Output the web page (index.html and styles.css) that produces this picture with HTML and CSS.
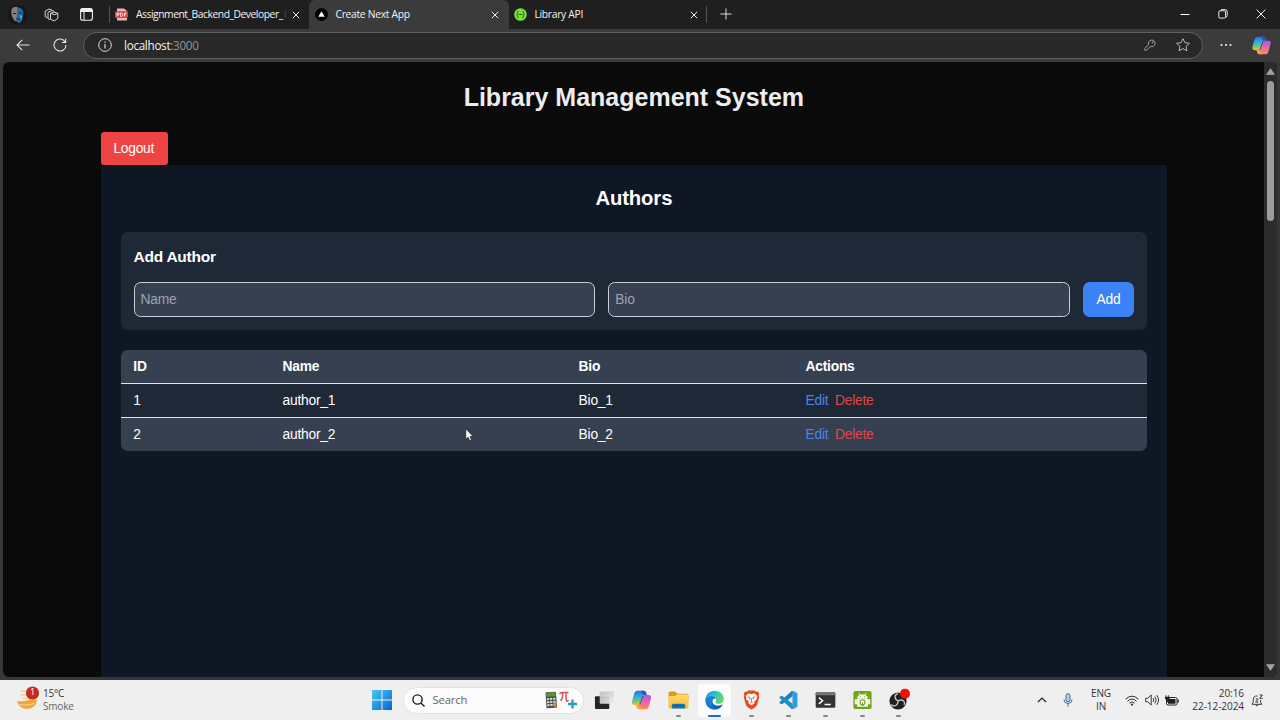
FILE: index.html
```html
<!DOCTYPE html>
<html lang="en">
<head>
<meta charset="utf-8">
<title>Library Management System</title>
<link rel="stylesheet" href="styles.css">
</head>
<body>
<svg class="defs" width="0" height="0" aria-hidden="true">
  <defs>
    <linearGradient id="cpBlue" x1="0" y1="0" x2="0" y2="1"><stop offset="0" stop-color="#2a6fe0"/><stop offset=".45" stop-color="#28b6dd"/><stop offset=".75" stop-color="#7cc66a"/><stop offset="1" stop-color="#f4c52c"/></linearGradient>
    <linearGradient id="cpPink" x1="0" y1="0" x2="0" y2="1"><stop offset="0" stop-color="#a25be8"/><stop offset=".5" stop-color="#ee62a8"/><stop offset="1" stop-color="#ff8a4c"/></linearGradient>
    <linearGradient id="win" x1="0" y1="0" x2="1" y2="1"><stop offset="0" stop-color="#4cc6f7"/><stop offset="1" stop-color="#0568c8"/></linearGradient>
    <linearGradient id="edgeTop" x1="0" y1="0" x2="1" y2=".4"><stop offset="0" stop-color="#1f9fe0"/><stop offset=".5" stop-color="#2bbfd0"/><stop offset="1" stop-color="#62d668"/></linearGradient>
    <linearGradient id="edgeLow" x1="0" y1="0" x2="0" y2="1"><stop offset="0" stop-color="#1b8fdc"/><stop offset="1" stop-color="#0f58a8"/></linearGradient>
    <linearGradient id="folder" x1="0" y1="0" x2="0" y2="1"><stop offset="0" stop-color="#ffdb6b"/><stop offset="1" stop-color="#f6bd30"/></linearGradient>
    <linearGradient id="task" x1="0" y1="0" x2="1" y2="1"><stop offset="0" stop-color="#bdbdbd"/><stop offset="1" stop-color="#f0f0f0"/></linearGradient>
    <symbol id="close" viewBox="0 0 8 8"><path d="M.8.8l6.400 6.400M7.200.8L.8 7.200" fill="none" stroke="currentColor" stroke-width="1"/></symbol>
    <symbol id="copilot" viewBox="0 0 20 20">
      <path d="M6 .8h6q2 0 2.600 1.900l.6 2.200h-1.700q-2 0-2.600 2L9 13.200Q8.400 15 6.500 15H3.200Q-.4 15 .5 11.500L2.600 3.700Q3.400.8 6 .8z" fill="url(#cpBlue)"/>
      <path d="M14 19.200H8q-2 0-2.600-1.900l-.6-2.200h1.700q2 0 2.600-2L11 6.800Q11.600 5 13.500 5h3.300q3.600 0 2.700 3.500l-2.100 7.800q-.8 2.900-3.400 2.900z" fill="url(#cpPink)"/>
      <path d="M9.500.8H12q2 0 2.600 1.900l.6 2.300h-2.300q-1.600 0-2.100-1.700z" fill="#2452c9"/>
      <path d="M10.500 19.200H8q-2 0-2.600-1.900L4.800 15h2.300q1.600 0 2.100 1.700z" fill="#f5a33f"/>
      <path class="fold" d="M11 5.700h1.500q-1 .3-1.400 1.600l-1.900 6q-.4 1-1 1H7q1.300-.2 1.700-1.500l1.900-6z"/>
    </symbol>
  </defs>
</svg>
<div class="screen">
  <div class="tabstrip">
    <div class="strip-tools">
      <svg class="avatar" viewBox="0 0 20 20"><circle cx="10" cy="10" r="10" fill="#15171c"/><path d="M3.500 4q3-3 6-2l1 6-1 8q-3 1-4-2-3-4-2-10z" fill="#8b7a82"/><path d="M9.500 2.500q5 0 6 5l-1.500 8-3 3q-3-2-2.500-6z" fill="#256a9e"/><path d="M5 8.500h3M11 8h3M8 14h4" stroke="#182433"/><path d="M12 10l2 1-1 4z" fill="#4fc1f1"/></svg>
      <svg class="workspaces" viewBox="0 0 15 14" fill="none" stroke="#d5d5d5" stroke-width="1" stroke-linejoin="round"><path d="M6.500 5.300L10 4l3.800 1.300v5.200L10.300 12.900 6.500 11.300zM6.500 5.300l3.800 1.400 3.500-1.400"/><path d="M6 11.500L4 10.700V4.300L7.700 2.500l2.600.9M3.600 9.700L1.200 8.800V3.200L5 1l2.800.9"/></svg>
      <svg class="tabmenu" viewBox="0 0 13 13"><rect x=".6" y=".6" width="11.800" height="11.600" rx="2" fill="none" stroke="#eee" stroke-width="1.100"/><path d="M.6 4V2.500Q.6.600 2.500.6h8q1.900 0 1.900 1.900V4z" fill="#eee"/><path d="M4 4v8.200" stroke="#eee"/></svg>
    </div>
    <div class="divider"></div>
    <div class="tab tab-first">
      <svg class="favicon" viewBox="0 0 13 13"><path d="M2 .5h7L12 3v9.500H2z" fill="#e9b5b5"/><rect y="3.200" width="13" height="6.800" rx="1" fill="#dc3c42"/><path d="M2 8.500V5h1.300q1 0 1 1t-1 1H2M5.600 5h.8q1.500 0 1.500 1.700T6.400 8.400h-.8zM9.500 8.500V5h2M9.500 6.700h1.600" fill="none" stroke="#fff" stroke-width=".8"/></svg>
      <span class="tab-title title-fade">Assignment_Backend_Developer_<span class="faint">I</span></span>
      <svg class="x"><use href="#close"/></svg>
    </div>
    <div class="tab tab-active">
      <svg class="favicon" viewBox="0 0 13 13"><circle cx="6.500" cy="6.500" r="6.400" fill="#000"/><path d="M6.500 3.300l3.200 5.500H3.300z" fill="#fff"/></svg>
      <span class="tab-title">Create Next App</span>
      <svg class="x"><use href="#close"/></svg>
    </div>
    <div class="tab tab-last">
      <svg class="favicon" viewBox="0 0 13 13"><circle cx="6.500" cy="6.500" r="6.300" fill="#79e13c"/><path d="M4.700 3.200q-1.300 0-1.200 1.300.1 1.800-.9 2 1 .2.900 2-.1 1.300 1.200 1.300M8.300 3.200q1.300 0 1.200 1.300-.1 1.800.9 2-1 .2-.9 2 .1 1.300-1.200 1.300M4.700 6.500h3.700" fill="none" stroke="#1d4b1b" stroke-width=".9"/></svg>
      <span class="tab-title">Library API</span>
      <svg class="x"><use href="#close"/></svg>
    </div>
    <div class="divider"></div>
    <svg class="newtab" viewBox="0 0 12 12"><path d="M6 .5v11M.5 6h11" stroke="#ddd" stroke-width="1"/></svg>
    <div class="window-controls">
      <svg viewBox="0 0 10 10"><path d="M.5 5.500h9" stroke="#fff"/></svg>
      <svg viewBox="0 0 10 10" fill="none" stroke="#fff" stroke-width=".9"><rect x=".8" y="1.800" width="6.800" height="7.300" rx="1.200"/><path d="M2.500 1.600Q2.800.6 4 .6h3.200q2 0 2 2v4q0 1.200-1.300 1.600"/></svg>
      <svg viewBox="0 0 10 10"><path d="M.6.600l8.800 8.800M9.400.6L.6 9.400" stroke="#fff" stroke-width=".95"/></svg>
    </div>
  </div>

  <div class="toolbar">
    <svg class="back" viewBox="0 0 14 12" fill="none" stroke="#e4e4e4" stroke-width="1.100"><path d="M13.500 6H1M6.200.8L1 6l5.200 5.200"/></svg>
    <svg class="reload" viewBox="0 0 14 14" fill="none" stroke="#e4e4e4" stroke-width="1.100"><path d="M12.300 4.200A6 6 0 1 0 13 7M12.700.8v3.700H9"/></svg>
    <div class="address">
      <svg class="info" viewBox="0 0 14 14" fill="none" stroke="#d8d8d8"><circle cx="7" cy="7" r="6.300"/><path d="M7 6v4.500M7 3.500v1.300" stroke-width="1.200"/></svg>
      <span class="url">localhost<span class="port">:3000</span></span>
      <svg class="key" viewBox="0 0 12 12" fill="none" stroke="#a8a8a8" stroke-width=".95" stroke-linejoin="round"><path d="M4.700 5.600A3.300 3.300 0 1 1 6.500 7.400L2.500 11.200H.8V9.400z"/><circle cx="8.600" cy="3.500" r=".5"/></svg>
      <svg class="star" viewBox="0 0 14 14" fill="none" stroke="#b5b5b5" stroke-linejoin="round"><path d="M7 .7l1.900 4 4.500.6-3.300 3 .9 4.500L7 10.600l-4 2.200.9-4.500-3.300-3 4.500-.6z"/></svg>
    </div>
    <svg class="dots" viewBox="0 0 12 4"><g fill="#eee"><circle cx="1.500" cy="2" r="1.100"/><circle cx="6" cy="2" r="1.100"/><circle cx="10.500" cy="2" r="1.100"/></g></svg>
    <svg class="copilot-bar"><use href="#copilot"/></svg>
  </div>

  <div class="frame">
    <div class="page">
      <main class="container">
        <h1 class="page-title">Library Management System</h1>
        <button class="logout">Logout</button>
        <section class="authors">
          <h2 class="section-title">Authors</h2>
          <form class="card">
            <h3 class="card-title">Add Author</h3>
            <div class="fields">
              <input class="field" placeholder="Name">
              <input class="field" placeholder="Bio">
              <button class="add" type="button">Add</button>
            </div>
          </form>
          <div class="table">
            <div class="row head"><span>ID</span><span>Name</span><span>Bio</span><span>Actions</span></div>
            <div class="row"><span>1</span><span>author_1</span><span>Bio_1</span><span class="actions"><a class="edit">Edit</a><a class="delete">Delete</a></span></div>
            <div class="row hovered"><span>2</span><span>author_2</span><span>Bio_2</span><span class="actions"><a class="edit">Edit</a><a class="delete">Delete</a></span></div>
          </div>
        </section>
      </main>
    </div>
    <div class="scrollbar">
      <svg class="arrow" viewBox="0 0 9 7"><path d="M4.500.6L8.500 6.500h-8z" fill="#a4a4a4" stroke="#a4a4a4" stroke-width=".6" stroke-linejoin="round"/></svg>
      <div class="thumb"></div>
      <svg class="arrow arrow-down" viewBox="0 0 9 7"><path d="M4.500 6.400L.5.500h8z" fill="#a4a4a4" stroke="#a4a4a4" stroke-width=".6" stroke-linejoin="round"/></svg>
    </div>
  </div>

  <div class="taskbar">
    <div class="weather">
      <svg class="weather-icon" viewBox="0 0 24 26"><path d="M5 5h8M4 9h8M7 12.500h10" stroke="#f1d48f" stroke-width="1.300"/><path d="M1 15q6 1 12-1 5-1 8 0-1 8-9 9-9 0-11-8z" fill="#efa73b"/><path d="M3 18.500q8 1.500 15-1" fill="none" stroke="#ffd88b" stroke-width="1.100"/><circle cx="16.500" cy="7" r="6.600" fill="#c72a20"/></svg>
      <span class="badge">1</span>
      <div class="weather-text"><span>15°C</span><span class="muted">Smoke</span></div>
    </div>
    <div class="apps">
      <svg class="start" viewBox="0 0 20 20"><path d="M0 0h9.500v9.500H0zM10.500 0H20v9.500h-9.500zM0 10.500h9.500V20H0zM10.500 10.500H20V20h-9.500z" fill="url(#win)"/></svg>
      <div class="search">
        <svg class="lens" viewBox="0 0 13 13" fill="none" stroke="#1c1c1c" stroke-width="1.400"><circle cx="5.500" cy="5.500" r="4.600"/><path d="M8.900 8.900l3.600 3.600"/></svg>
        <span class="search-text">Search</span>
        <svg class="doodle" viewBox="0 0 32 18"><g transform="rotate(-4 6 9)"><rect x="1" y="1" width="10.500" height="16" rx=".8" fill="#4c514e"/><rect x="1.500" y="1.500" width="9.500" height="4" fill="#56943f"/><path d="M2 8h9M2 11h9M2 14h9" stroke="#ddd" stroke-width="1.900" stroke-dasharray="2.200 .9"/><path d="M8.500 12h2.200v4H8.500z" fill="#e69438"/></g><path d="M14.500 3.200q1-1.800 3-1.600h6M17.800 2q.1 5-2 8M21.200 2q-.5 7 .5 8 1 .5 1.800-.8" fill="none" stroke="#d4555a" stroke-width="1.500"/><path d="M27.500 8.500v9M23 13h9" stroke="#2a9bc7" stroke-width="2.300"/></svg>
      </div>
      <div class="app task-view"><svg viewBox="0 0 22 20"><rect x="1" y="6" width="15" height="13.500" rx="1" fill="#242424"/><rect x="6" y="1" width="15" height="13" rx="1" fill="url(#task)" opacity=".93"/></svg></div>
      <div class="app light"><svg><use href="#copilot"/></svg></div>
      <div class="app running"><svg viewBox="0 0 22 20"><path d="M.5 3q0-2 2-2h5l2.500 2.500h9.500q2 0 2 2V10H.5z" fill="#dc9b1e"/><path d="M.5 7q0-1.200 1.200-1.200h5.500l2.200-1.500h10.200q1.900 0 1.900 1.800v11q0 1.900-1.900 1.900H2.400Q.5 19 .5 17z" fill="url(#folder)"/><path d="M4 18.800v-3.300q0-1.700 1.700-1.700h10.600q1.700 0 1.700 1.700v3.300z" fill="#1775bd"/><path d="M6.500 16h9" stroke="#0e548f" stroke-width="1.100"/></svg></div>
      <div class="app active"><svg viewBox="0 0 22 22"><path d="M1 12C.5 5 5.500.8 11.300.8 17 .8 21.300 5 21.300 10c0 3.200-2.400 5.300-5.500 5.300-2.500 0-3.900-.9-3.900-1.700 0-.6 1-1.200 1-2.900 0-2.400-2.200-4.400-5-4.400C4.500 6.300 1.700 8.700 1 12z" fill="url(#edgeTop)"/><path d="M1 11.500C1.200 8.400 4.400 6.200 7.900 6.200c2.500 0 4.500 1.500 4.900 3.200-2.300-.4-4 .9-4 3.300 0 3.500 4.500 5.800 9.900 3.400.8-.3 1.400.2.900 1-1.800 2.700-4.900 4.400-8.300 4.400C5.500 21.500 1 17.300 1 11.500z" fill="url(#edgeLow)"/><path d="M8.800 13q-1.500 5.500 3.500 8.400-7.800.300-10.800-7.400 0-5 5-6.500-1.500 3 2.300 5.500z" fill="#1c83d2" opacity=".6"/></svg></div>
      <div class="app running"><svg viewBox="0 0 20 22"><path d="M5 2l1.500-1.500h7L15 2l1.800-.3 1.700 2.200-.6 2.100.6 2-2.400 8.500Q15.500 18.500 10 21.500 4.500 18.500 3.900 16.500L1.500 8l.6-2-.6-2.100 1.700-2.200z" fill="#ed461f"/><path d="M10 4.500l3.500-.6 3 3-.8 2 .2 1.300-3 2.500.7 1.500-3.600 2.800-3.600-2.800.7-1.500-3-2.500.2-1.300-.8-2 3-3z" fill="#fff"/><path d="M6 7.500l2.500.7-.6 2.500M14 7.500l-2.500.7.6 2.500M10 9v4M8.500 13.300h3" fill="none" stroke="#ed461f" stroke-width=".9"/></svg></div>
      <div class="app running"><svg viewBox="0 0 22 22"><path d="M15.500 6.800L4 15.600 1.200 14.500v-1.300L14.700.9l1.500.5z" fill="#1d7fc2"/><path d="M15.500 15.200L4 6.400 1.200 7.500v1.300l13.500 12.300 1.500-.5z" fill="#248dcd"/><path d="M15.300.8l5.500 2.500v15.400l-5.500 2.500z" fill="#2d9fe0"/></svg></div>
      <div class="app running"><svg viewBox="0 0 22 20"><rect x=".7" y="2" width="20.600" height="16" rx="1.300" fill="#333"/><path d="M.7 5V3.300Q.7 2 2 2h18q1.300 0 1.300 1.300V5z" fill="#777"/><path d="M4 7.500l4 3.300-4 3.300M10 14.700h6.500" fill="none" stroke="#fff" stroke-width="1.500"/></svg></div>
      <div class="app running"><svg viewBox="0 0 22 22"><rect x="1" y="1" width="20" height="20" rx="2" fill="#73a316"/><path d="M5.500 9q.4-3.800 5.500-3.800T16.500 9zM5.500 10h11v8h-11zM3 10.500h1.500v5H3zM17.500 10.500H19v5h-1.500zM7 3l1.500 2.800M15 3l-1.500 2.800" fill="#fff" stroke="#fff" stroke-width=".8"/><circle cx="8.500" cy="7.500" r=".7" fill="#73a316"/><circle cx="13.500" cy="7.500" r=".7" fill="#73a316"/><circle cx="11" cy="13.500" r="2.800" fill="none" stroke="#73a316" stroke-width="1.300"/><path d="M11 13.500v3.800M9.700 16l1.300 1.500 1.300-1.500" fill="none" stroke="#73a316"/></svg></div>
      <div class="app running"><svg class="obs" viewBox="0 0 22 22"><circle cx="10.500" cy="11.500" r="9" fill="#211f24"/><path d="M10.500 11.500Q7 9.500 7.500 6.300 8 4 10.500 4M10.500 11.500q3.600-2.100 6 .1 1.700 1.900.3 4M10.500 11.500q0 4.100-3.300 5.100Q4.700 17 3.500 15" fill="none" stroke="#c7c7c7" stroke-width="1.400"/><circle cx="17.800" cy="3.800" r="5.200" fill="#f90a0a"/></svg></div>
    </div>
    <div class="tray">
      <svg class="chevron" viewBox="0 0 10 6"><path d="M1 5l4-4 4 4" fill="none" stroke="#222" stroke-width="1.200"/></svg>
      <svg class="mic" viewBox="0 0 10 14" fill="none" stroke="#386b9d"><rect x="3" y=".7" width="4" height="8" rx="2" fill="#b8d0e4"/><path d="M1 6.500q0 4 4 4t4-4M5 10.500v3"/></svg>
      <div class="lang"><span>ENG</span><span>IN</span></div>
      <svg class="wifi" viewBox="0 0 14 11" fill="none" stroke="#252525" stroke-width=".95"><path d="M.6 4.200Q7-1.900 13.400 4.200M2.500 6.200q4.500-4.300 9 0M4.500 8.100q2.500-2.400 5 0"/><circle cx="7" cy="9.600" r=".7" fill="#252525"/></svg>
      <svg class="speaker" viewBox="0 0 14 12" fill="none" stroke="#252525" stroke-width=".9"><path d="M.7 4.200h2.200L6.200 1v10L2.900 7.800H.7zM8 4q1.600 2 0 4M9.900 2.500q2.600 3.500 0 7M11.700 1q3.700 5 0 10"/></svg>
      <svg class="battery" viewBox="0 0 14 11"><rect x="1.500" y="2.500" width="10.500" height="7.500" rx="1.500" fill="#f0f0f0" stroke="#222"/><path d="M3 4h7.500v4.700H3zM12.500 4.500h1.300v3h-1.300z" fill="#1e1e1e"/><path d="M1 0v2M3.500 0v2M0 2h4.500v1.500L2.500 5 0 3.500zM1.800 5h1v2h-1z" fill="#222" stroke="#222" stroke-width=".6"/></svg>
      <div class="clock"><span>20:16</span><span>22-12-2024</span></div>
      <svg class="bell" viewBox="0 0 12 13" fill="none" stroke="#333" stroke-width=".95"><path d="M6.500 2Q2.200 1.500 2.200 6v2.200L1 10.300h9.800L9.600 8.200V6M4.200 10.500q1.500 2.800 3.400 0M4.700 5h2.500L4.700 8h2.600M8.500 1h3L8.700 4.300h3"/></svg>
    </div>
  </div>
  <svg class="cursor" viewBox="0 0 8 13"><path d="M.7.800v10.100l2.300-2.100 1.500 3.500 1.700-.8-1.500-3.300h3z" fill="#fff" stroke="#111" stroke-width=".6"/></svg>
</div>
</body>
</html>
```
FILE: styles.css
```css
* { box-sizing: border-box; }
body { margin: 0; background: #373737; font-family: "Liberation Sans", Arial, sans-serif; }
svg { display: block; flex: none; }
.defs { position: absolute; }
.screen { position: relative; width: 1280px; height: 720px; overflow: hidden; display: flex; flex-direction: column; }

.tabstrip { height: 29px; flex: none; display: flex; align-items: center; background: #1f1f1f; font-family: "Open Sans", "Noto Sans", sans-serif; color: #f2f2f2; }
.strip-tools { width: 109px; display: flex; align-items: center; padding-left: 8px; }
.avatar { width: 20px; height: 20px; }
.workspaces { width: 15px; height: 14px; margin-left: 16px; }
.tabmenu { width: 13px; height: 13px; margin-left: 21px; }
.divider { width: 1px; height: 17px; background: #565656; flex: none; }
.tab { height: 29px; display: flex; align-items: center; flex: none; }
.tab-first { width: 199px; padding: 0 9px 0 5px; }
.tab-active { width: 200px; padding: 0 10px 0 6px; background: #3b3b3b; border-radius: 6px 6px 0 0; }
.tab-last { width: 197px; padding: 0 8px 0 5px; }
.favicon { width: 13px; height: 13px; }
.tab-title { flex: 1; min-width: 0; margin-left: 7.5px; padding-bottom: 2px; font-size: 10.3px; line-height: 14px; letter-spacing: -.3px; white-space: nowrap; }
.title-fade { flex: none; width: 152px; margin-left: 8px; margin-right: auto; letter-spacing: -.46px; }
.faint { margin-left: 1px; color: #484848; }
.x { width: 8px; height: 8px; color: #eee; }
.newtab { width: 12px; height: 12px; margin-left: 12.5px; margin-bottom: 1px; }
.window-controls { margin-left: auto; display: flex; gap: 28px; padding: 0 14px 1px 0; }
.window-controls svg { width: 10px; height: 10px; }

.toolbar { height: 33px; flex: none; display: flex; align-items: center; padding: 0 9px 1px 16px; background: #3b3b3b; font-family: "Open Sans", "Noto Sans", sans-serif; }
.back { width: 14px; height: 12px; }
.reload { width: 14px; height: 14px; margin-left: 23px; }
.address { width: 1120px; height: 27px; margin-left: 16px; padding: 0 12px 0 14px; border: 1px solid #606060; border-radius: 14px; background: #282828; display: flex; align-items: center; }
.info { width: 14px; height: 14px; }
.url { margin-left: 12px; font-size: 11.7px; letter-spacing: -.3px; line-height: 17px; color: #f4f4f4; }
.port { color: #939393; }
.key { width: 12px; height: 12px; margin-left: auto; }
.star { width: 14px; height: 14px; margin-left: 20px; }
.dots { width: 12px; height: 4px; margin-left: 17px; }
.copilot-bar { width: 19px; height: 19px; margin-left: auto; }
.fold { fill: #3b3b3b; }

.frame { height: 615px; margin: 0 3px; flex: none; display: flex; border-radius: 6px; overflow: hidden; background: #0a0a0a; }
.page { flex: 1; display: flex; justify-content: center; padding-left: .7px; }
.container { width: 1066.67px; display: flex; flex-direction: column; align-items: stretch; color: #ededed; font-size: 13.8px; letter-spacing: -.24px; line-height: 20px; }
.page-title { margin: 20px 0; text-align: center; font-size: 25px; letter-spacing: 0; line-height: 30px; font-weight: 700; }
.logout, .add { border: 0; color: #fff; font: 13.8px/20px "Liberation Sans", Arial, sans-serif; letter-spacing: -.24px; }
.logout { align-self: flex-start; width: 67.5px; height: 33.33px; padding: 0 1px 0 0; background: #ef4444; border-radius: 3.33px; }
.authors { flex: 1; background: #101724; padding: 20px; color: #fff; }
.section-title { margin: 0 0 20px; text-align: center; font-size: 20.3px; letter-spacing: -.12px; line-height: 26.67px; font-weight: 700; }
.card { height: 98px; margin-bottom: 20px; padding: 13.33px 13.33px 13.33px 13px; border-radius: 6.67px; background: #1f2836; }
.card-title { margin: 0 0 13px; font-size: 15.5px; letter-spacing: -.25px; line-height: 23.33px; font-weight: 700; }
.fields { display: flex; gap: 13.33px; }
.field { flex: 1; min-width: 0; height: 35px; padding: 0 6px; border: 1px solid #c9cfd8; border-radius: 6.67px; background: #374050; color: #fff; font: 13.8px/20px "Liberation Sans", Arial, sans-serif; letter-spacing: -.24px; }
.field::placeholder { color: #9ca3af; opacity: 1; }
.add { width: 50.7px; height: 35px; padding: 1px 0 0; border-radius: 6.67px; background: #3b82f6; }
.table { border-radius: 6.67px; overflow: hidden; background: #1f2836; }
.row { height: 34px; padding: 1px 0 0 12.8px; display: grid; grid-template-columns: 149.3px 296px 227px 1fr; align-items: center; border-bottom: 1px solid #dfe3ea; }
.head { background: #374050; font-weight: 700; }
.hovered { height: 33px; background: #374050; border-bottom: 0; }
.actions { display: flex; gap: 6.67px; }
.edit { color: #4883ec; }
.delete { color: #df4549; }

.scrollbar { width: 13px; padding: 6px 0 6px; background: #2c2c2c; display: flex; flex-direction: column; align-items: center; }
.arrow { width: 9px; height: 7px; }
.thumb { width: 7px; height: 140px; margin-top: 6px; border-radius: 4px; background: #9c9c9c; }
.arrow-down { margin-top: auto; }

.taskbar { height: 40px; margin-top: 3px; flex: none; display: grid; grid-template-columns: 372px 1fr 250px; background: #efefef; color: #333; font: 10px/14px "Open Sans", "Noto Sans", sans-serif; }
.weather { position: relative; display: flex; align-items: center; padding-left: 16px; }
.weather-icon { width: 24px; height: 26px; margin-top: -3px; }
.badge { position: absolute; left: 30px; top: 5px; color: #fff; font-size: 9px; }
.weather-text { display: flex; flex-direction: column; margin-left: 3px; line-height: 13px; letter-spacing: -.2px; }
.muted { color: #666; }
.apps { display: flex; align-items: center; }
.start { width: 20px; height: 20px; }
.search { width: 181px; height: 27px; margin: 0 4px 0 11px; padding: 0 6px 0 8px; display: flex; align-items: center; border: 1px solid #e2e2e2; border-radius: 14px; background: #fcfcfc; }
.lens { width: 13px; height: 13px; }
.search-text { margin-left: 7.5px; font-size: 11.3px; letter-spacing: -.15px; color: #666; }
.doodle { width: 32px; height: 18px; margin-left: auto; }
.app { position: relative; width: 33px; height: 33px; margin-right: 3.8px; border-radius: 4px; display: flex; align-items: center; justify-content: center; flex: none; }
.app svg { width: 21px; height: 20px; }
.app .obs { width: 21px; height: 21px; overflow: visible; }
.light .fold { fill: #efefef; }
.active { background: #fcfcfc; }
.running::after, .active::after { content: ""; position: absolute; bottom: 0; left: 14px; width: 5px; height: 2px; border-radius: 1px; background: #888; }
.active::after { left: 10px; width: 13px; background: #1671b9; }
.tray { display: flex; align-items: center; padding-left: 7px; }
.chevron { width: 10px; height: 6px; }
.mic { width: 10px; height: 14px; margin-left: 16px; }
.lang { width: 30px; margin-left: 13px; display: flex; flex-direction: column; align-items: center; line-height: 13.5px; letter-spacing: -.1px; }
.wifi { width: 14px; height: 11px; margin-left: 9px; }
.speaker { width: 14px; height: 12px; margin-left: 6px; }
.battery { width: 14px; height: 11px; margin-left: 6px; }
.clock { width: 65px; display: flex; flex-direction: column; align-items: flex-end; line-height: 13.5px; letter-spacing: -.05px; white-space: nowrap; }
.bell { width: 12px; height: 13px; margin-left: 7px; }
.cursor { position: absolute; left: 465px; top: 428px; width: 8.5px; height: 13.5px; }
```
